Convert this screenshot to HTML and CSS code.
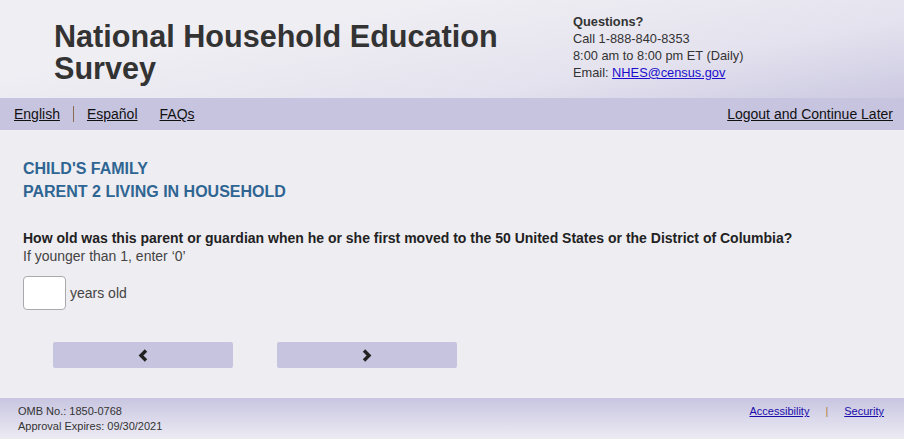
FILE: index.html
```html
<!DOCTYPE html>
<html lang="en">
<head>
    <meta charset="UTF-8">
    <meta name="viewport" content="width=device-width, initial-scale=1.0">
    <title>National Household Education Survey</title>
    <link rel="stylesheet" href="styles.css">
</head>
<body>
    <header class="banner">
        <h1 class="site-title">National Household Education Survey</h1>
        <div class="contact">
            <strong>Questions?</strong><br>
            Call 1-888-840-8353<br>
            8:00 am to 8:00 pm ET (Daily)<br>
            Email: <a href="#">NHES@census.gov</a>
        </div>
    </header>

    <nav class="topnav">
        <div class="lang">
            <a href="#">English</a>
            <span class="sep"></span>
            <a href="#">Español</a>
            <a href="#" class="faq">FAQs</a>
        </div>
        <a href="#">Logout and Continue Later</a>
    </nav>

    <main class="content">
        <h2 class="section">CHILD'S FAMILY<br>PARENT 2 LIVING IN HOUSEHOLD</h2>

        <p class="question">How old was this parent or guardian when he or she first moved to the 50 United States or the District of Columbia?</p>
        <p class="hint">If younger than 1, enter ‘0’</p>

        <div class="answer">
            <input type="text" class="age-input">
            <label>years old</label>
        </div>

        <div class="nav-buttons">
            <button type="button" class="step-btn" aria-label="Previous">
                <svg width="10" height="13" viewBox="0 0 10 13"><path d="M8 1.5 L3 6.5 L8 11.5" fill="none" stroke="#222" stroke-width="3.4"/></svg>
            </button>
            <button type="button" class="step-btn" aria-label="Next">
                <svg width="10" height="13" viewBox="0 0 10 13"><path d="M2 1.5 L7 6.5 L2 11.5" fill="none" stroke="#222" stroke-width="3.4"/></svg>
            </button>
        </div>
    </main>

    <footer class="footer">
        <div class="omb">
            OMB No.: 1850-0768<br>
            Approval Expires: 09/30/2021
        </div>
        <div class="footer-links">
            <a href="#">Accessibility</a>
            <span class="bar">|</span>
            <a href="#">Security</a>
        </div>
    </footer>
</body>
</html>
```

FILE: styles.css
```css
body {
    font-family: Arial, "Liberation Sans", sans-serif;
    margin: 0;
    padding: 0;
    background-color: #eeedf2;
    color: #333;
    height: 439px;
    display: flex;
    flex-direction: column;
}

.banner {
    display: flex;
    height: 98px;
    box-sizing: border-box;
    padding: 20px 0 0 54px;
    background: linear-gradient(170deg, #efeef3 30%, #e4e2ee 70%, #ccc9e2 100%);
}

.site-title {
    width: 519px;
    margin: 0;
    font-size: 30.6px;
    line-height: 32px;
    font-weight: bold;
    color: #333;
}

.contact {
    font-size: 12.8px;
    line-height: 17px;
    color: #333;
    margin-top: -7px;
}

.contact a {
    color: #1a0dcc;
}

.topnav {
    display: flex;
    justify-content: space-between;
    align-items: center;
    height: 32px;
    padding: 0 11px 0 14px;
    background-color: #c7c4e0;
    font-size: 14px;
}

.topnav a {
    color: #111;
}

.lang {
    display: flex;
    align-items: center;
}

.sep {
    width: 1px;
    height: 16px;
    background: #8a6a50;
    margin: 0 13px 0 13px;
}

.faq {
    margin-left: 22px;
}

.content {
    flex: 1;
    padding: 27px 23px 0;
}

.section {
    margin: 0 0 27px;
    font-size: 16px;
    line-height: 23px;
    color: #2f6592;
}

.question {
    margin: 0;
    font-size: 14px;
    font-weight: bold;
    line-height: 17px;
    color: #222;
}

.hint {
    margin: 0 0 11px;
    font-size: 14px;
    line-height: 18px;
    color: #444;
}

.answer {
    display: flex;
    align-items: center;
    gap: 4px;
    font-size: 14px;
    color: #444;
}

.age-input {
    width: 43px;
    height: 34px;
    box-sizing: border-box;
    border: 1px solid #aaa;
    border-radius: 4px;
    background: #fff;
}

.nav-buttons {
    display: flex;
    gap: 44px;
    margin: 32px 0 0 30px;
}

.step-btn {
    width: 180px;
    height: 26px;
    border: none;
    border-radius: 2px;
    background-color: #c7c4e0;
    display: flex;
    align-items: center;
    justify-content: center;
    cursor: pointer;
}

.footer {
    display: flex;
    justify-content: space-between;
    height: 41px;
    padding: 6px 20px 0 18px;
    box-sizing: border-box;
    background: linear-gradient(#c8c5e1, #ecebf3);
    font-size: 11px;
    line-height: 15px;
    color: #333;
}

.footer-links {
    display: flex;
    gap: 16px;
}

.footer-links a {
    color: #1a0dab;
}

.bar {
    color: #b08040;
}
```
